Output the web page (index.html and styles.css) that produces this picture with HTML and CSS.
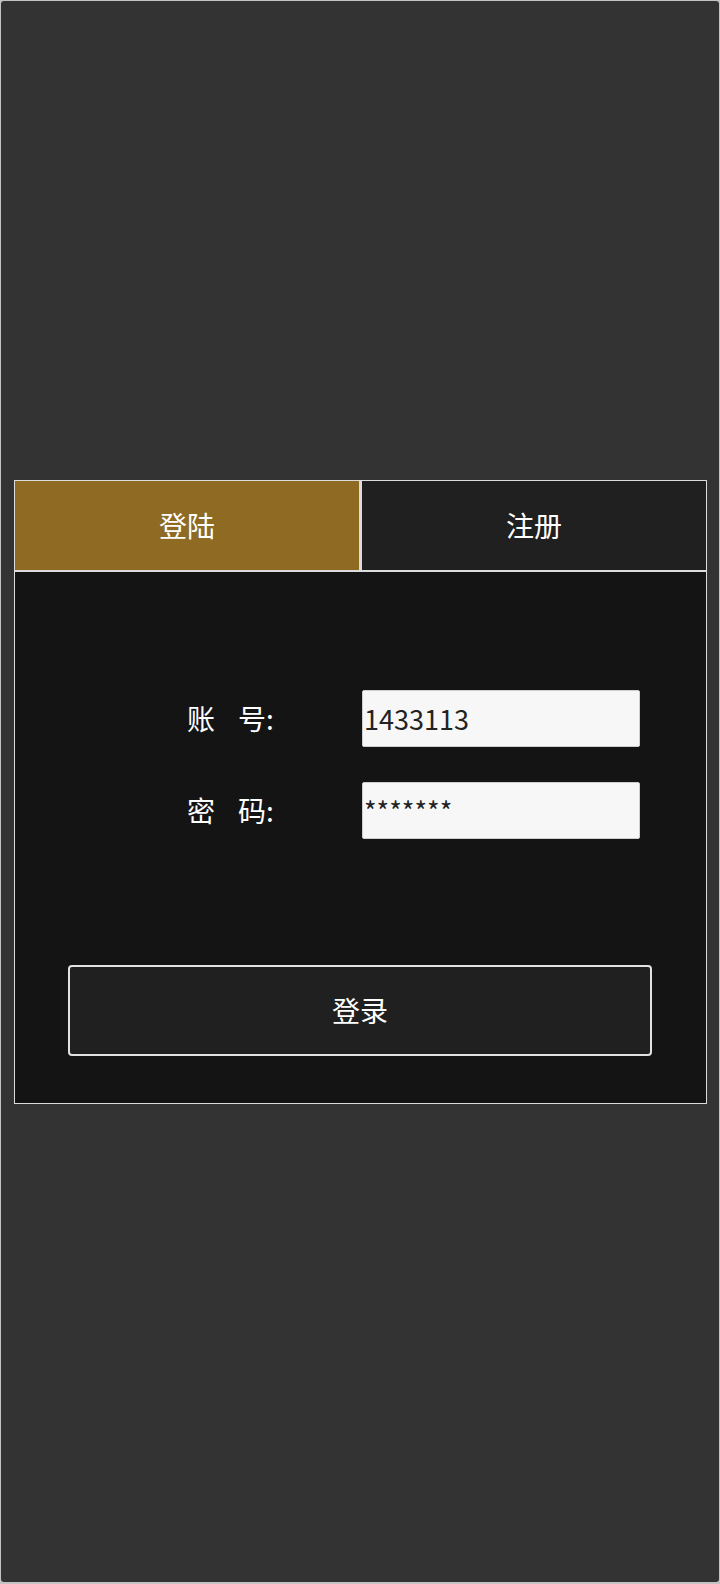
FILE: index.html
```html
<!DOCTYPE html>
<html lang="zh-CN">
<head>
    <meta charset="UTF-8">
    <meta name="viewport" content="width=device-width, initial-scale=1.0">
    <title>登陆</title>
    <link rel="stylesheet" href="styles.css">
</head>
<body>

    <div class="screen">
        <div class="card">
            <!-- Tabs -->
            <div class="tabs">
                <div class="tab active">登陆</div>
                <div class="tab">注册</div>
            </div>

            <!-- Login form -->
            <form class="panel" id="loginForm">
                <div class="row">
                    <label class="label" for="account"><span>账</span><span>号:</span></label>
                    <input type="text" id="account" class="field" value="1433113">
                </div>
                <div class="row">
                    <label class="label" for="password"><span>密</span><span>码:</span></label>
                    <input type="text" id="password" class="field" value="*******">
                </div>
                <button type="submit" class="submit">登录</button>
            </form>
        </div>
    </div>

</body>
</html>
```

FILE: styles.css
```css
body {
    margin: 0;
    padding: 0;
    background-color: #c4c4c4;
    font-family: "Noto Sans CJK SC", "Noto Sans", sans-serif;
}

.screen {
    height: 1581px;
    margin: 1px 1px 2px 1px;
    background-color: #333333;
    border-radius: 3px;
    display: flex;
    flex-direction: column;
    justify-content: center;
}

.card {
    margin: 0 12px 0 13px;
}

.tabs {
    display: flex;
}

.tab {
    flex: 1;
    height: 89px;
    border: 1px solid #dcdcdc;
    border-bottom: none;
    background: #202020;
    color: #ffffff;
    font-size: 28px;
    display: flex;
    justify-content: center;
    align-items: center;
}

.tab.active {
    background: #8e6a22;
}

.tab + .tab {
    border-left: 2px solid #dcdcdc;
}

.panel {
    background: #141414;
    border: 1px solid #dcdcdc;
    border-top-width: 2px;
    padding: 118px 0 47px 0;
    display: flex;
    flex-direction: column;
}

.row {
    display: grid;
    grid-template-columns: 175px 278px;
    align-items: center;
    padding-left: 172px;
    margin-bottom: 35px;
}

.row + .row {
    margin-bottom: 0;
}

.label {
    display: flex;
    gap: 23px;
    color: #ffffff;
    font-size: 28px;
}

.field {
    box-sizing: border-box;
    width: 278px;
    height: 57px;
    margin: 0;
    padding: 0 1px;
    border: 1px solid #cfcfcf;
    border-radius: 2px;
    background: #f7f7f7;
    color: #222222;
    font-family: "Noto Sans CJK SC", "Noto Sans", sans-serif;
    font-size: 27px;
}

.submit {
    box-sizing: border-box;
    height: 91px;
    margin: 126px 54px 0 53px;
    border: 2px solid #e2e2e2;
    border-radius: 4px;
    background: #202020;
    color: #ffffff;
    font-family: "Noto Sans CJK SC", "Noto Sans", sans-serif;
    font-size: 28px;
    cursor: pointer;
}
```
